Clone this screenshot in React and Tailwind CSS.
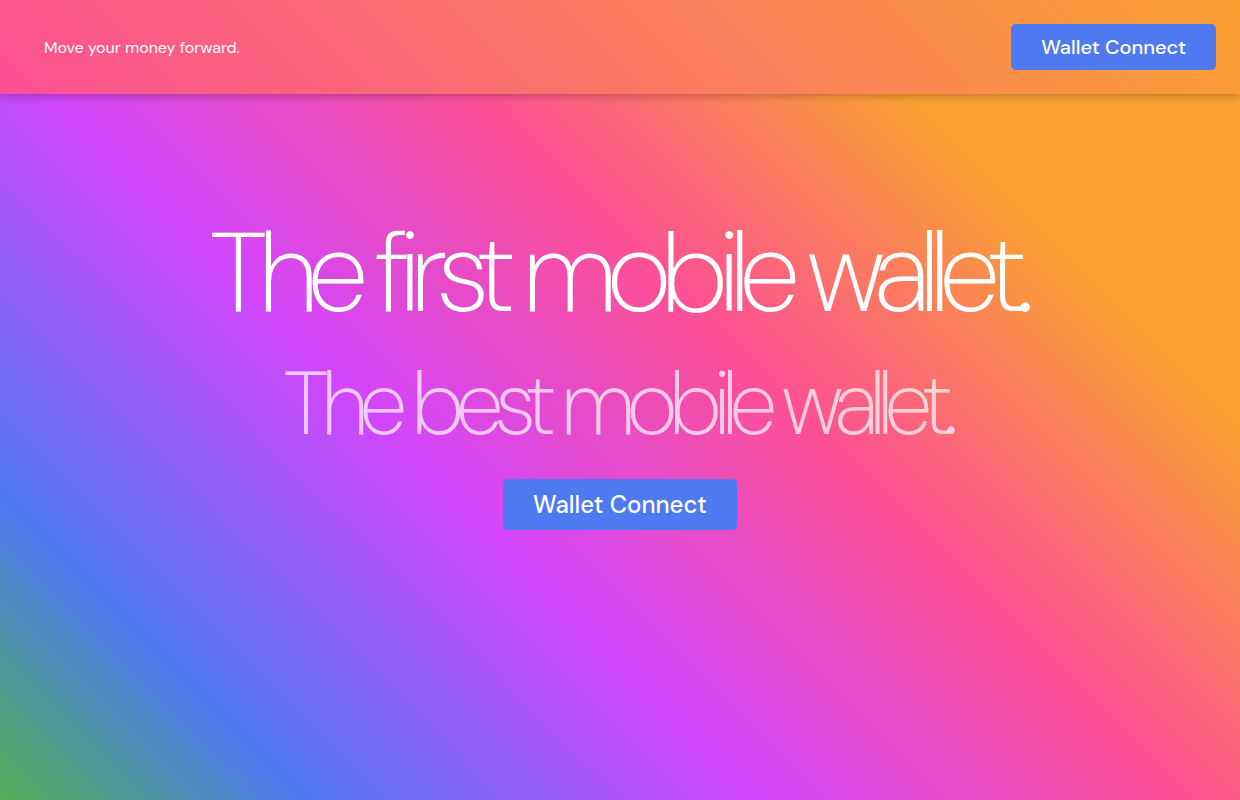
import React from 'react';

const Navbar = () => (
  <header className="relative z-10 flex items-center justify-between bg-[linear-gradient(45deg,#fc5095,#faa131)] py-6 pr-6 pl-11 shadow-[0_2px_8px_rgba(0,0,0,0.25)]">
    <p className="pt-px text-base text-white">Move your money forward.</p>
    <button
      type="button"
      className="rounded-[5px] bg-[#4f79f1] px-[30px] py-2 text-xl leading-[30px] font-medium text-white"
    >
      Wallet Connect
    </button>
  </header>
);

const Hero = () => (
  <main className="flex grow flex-col items-center px-6 pt-[114px] text-center">
    <h1 className="pr-2 text-[112px] leading-[130px] font-extralight tracking-[-11px] text-white">
      The first mobile wallet.
    </h1>
    <h2 className="mt-4 pr-2 text-[88px] leading-[101px] font-extralight tracking-[-9px] text-white/70">
      The best mobile wallet.
    </h2>
    <button
      type="button"
      className="mt-6 rounded-[5px] bg-[#4f79f1] px-[30px] py-2 text-2xl leading-[35px] font-medium text-white"
    >
      Wallet Connect
    </button>
  </main>
);

const App = () => (
  <div className="flex min-h-screen flex-col bg-[linear-gradient(45deg,#52ae53_0%,#4f79f1_15%,#d146fc_37%,#fc5095_58%,#faa131_79%)] font-['DM_Sans','Open_Sans',sans-serif] [font-optical-sizing:none]">
    <Navbar />
    <Hero />
  </div>
);

export default App;
